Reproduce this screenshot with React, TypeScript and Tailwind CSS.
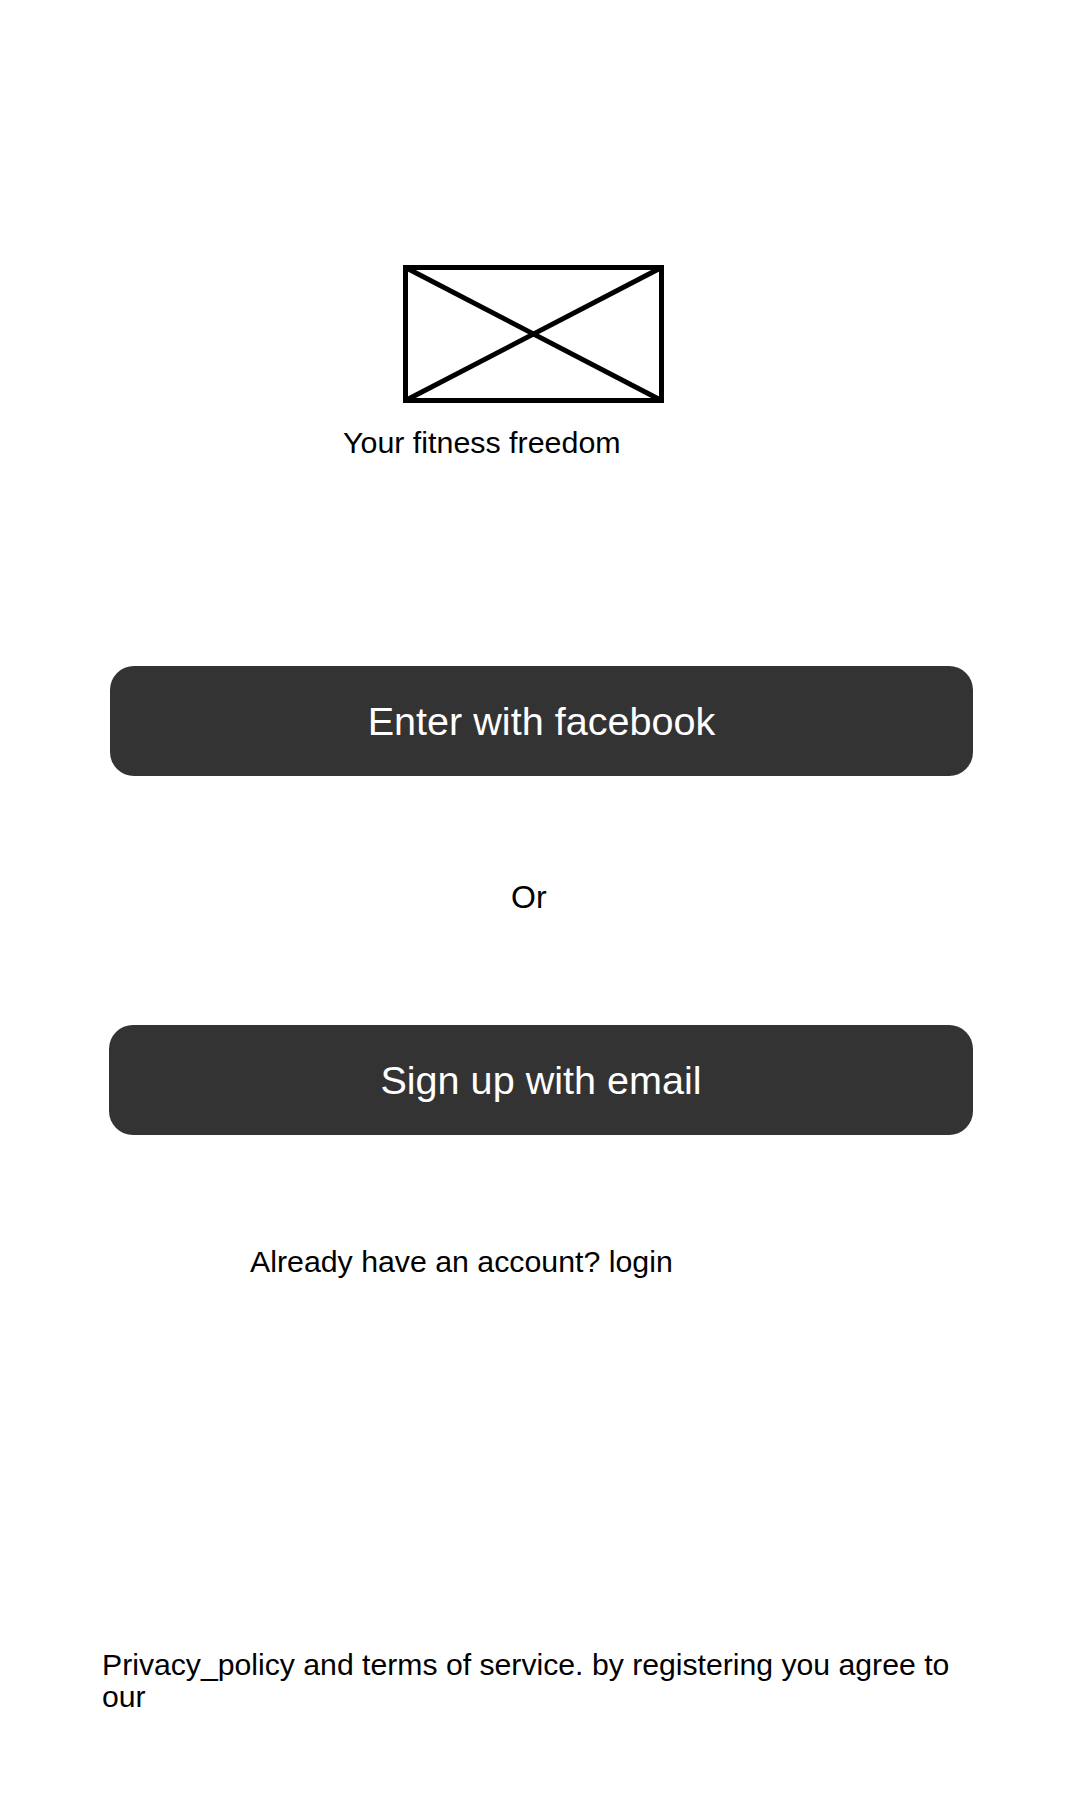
import React from "react";

export default function App() {
  return (
    <div
      className="w-[1080px] h-[1800px] bg-white flex flex-col text-black"
      style={{ fontFamily: '"Liberation Sans", Arial, sans-serif' }}
    >
      <div className="ml-[403px] mt-[265px] w-[261px] h-[138px]">
        <svg width="261" height="138" viewBox="0 0 261 138">
          <rect x="2.5" y="2.5" width="256" height="133" fill="none" stroke="#000" strokeWidth="5" />
          <line x1="2.5" y1="2.5" x2="258.5" y2="135.5" stroke="#000" strokeWidth="5" />
          <line x1="2.5" y1="135.5" x2="258.5" y2="2.5" stroke="#000" strokeWidth="5" />
        </svg>
      </div>
      <div className="ml-[343px] mt-[22px] text-[30.4px] leading-[34px]">Your fitness freedom</div>
      <button className="ml-[110px] mt-[207px] w-[863px] h-[110px] rounded-[24px] bg-[#333333] text-white text-[39.6px] leading-[46px] flex items-center justify-center">
        Enter with facebook
      </button>
      <div className="ml-[511px] mt-[103px] text-[32px] leading-[36px]">Or</div>
      <button className="ml-[109px] mt-[110px] w-[864px] h-[110px] rounded-[24px] bg-[#333333] text-white text-[39.6px] leading-[46px] flex items-center justify-center">
        Sign up with email
      </button>
      <div className="ml-[250px] mt-[110px] text-[30.3px] leading-[34px]">Already have an account? login</div>
      <div className="ml-[102px] mt-[370px] w-[876px] text-[30.2px] leading-[32px]">
        Privacy_policy and terms of service. by registering you agree to our
      </div>
    </div>
  );
}
